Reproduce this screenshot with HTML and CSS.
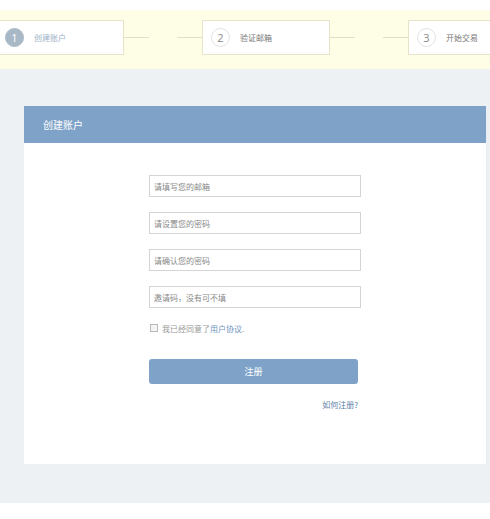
FILE: index.html
```html
<!DOCTYPE html>
<html>
<head>
    <meta charset="UTF-8">
    <meta name="viewport" content="width=device-width, initial-scale=1.0">
    <title>创建账户</title>
    <link rel="stylesheet" href="styles.css">
</head>
<body>
    <div class="top-gap"></div>
    <div class="steps-band">
        <div class="steps">
            <div class="step step-active">
                <span class="step-num">1</span>
                <span class="step-text">创建账户</span>
            </div>
            <div class="connector"><i></i><i></i></div>
            <div class="step">
                <span class="step-num">2</span>
                <span class="step-text">验证邮箱</span>
            </div>
            <div class="connector"><i></i><i></i></div>
            <div class="step">
                <span class="step-num">3</span>
                <span class="step-text">开始交易</span>
            </div>
        </div>
    </div>

    <div class="main">
        <div class="card">
            <div class="card-header">创建账户</div>
            <div class="card-body">
                <form class="reg-form">
                    <input type="text" class="field" placeholder="请填写您的邮箱">
                    <input type="password" class="field" placeholder="请设置您的密码">
                    <input type="password" class="field" placeholder="请确认您的密码">
                    <input type="text" class="field" placeholder="邀请码，没有可不填">
                    <label class="agree">
                        <span class="check"></span>
                        我已经同意了<a href="#" class="agree-link">用户协议</a>.
                    </label>
                    <button type="button" class="btn-submit">注册</button>
                    <div class="help"><a href="#">如何注册?</a></div>
                </form>
            </div>
        </div>
    </div>
</body>
</html>
```

FILE: styles.css
```css
body {
    margin: 0;
    font-family: "Noto Sans CJK SC", "Noto Sans", sans-serif;
    background-color: #ffffff;
    color: #666666;
}
.top-gap {
    height: 10px;
}
.steps-band {
    background-color: #fefde6;
    height: 59px;
    overflow: hidden;
}
.steps {
    display: flex;
    align-items: center;
    margin-left: -4px;
    padding-top: 10px;
    width: 560px;
}
.step {
    box-sizing: border-box;
    width: 128px;
    height: 35px;
    flex-shrink: 0;
    background-color: #ffffff;
    border: 1px solid #e8e4cb;
    display: flex;
    align-items: center;
    padding-left: 8px;
}
.step-num {
    box-sizing: border-box;
    width: 19px;
    height: 19px;
    border-radius: 50%;
    border: 1px solid #e3e3e3;
    color: #8a8a8a;
    font-size: 11px;
    line-height: 17px;
    text-align: center;
    font-family: "Open Sans", sans-serif;
    margin-right: 10px;
}
.step-text {
    font-size: 8px;
    color: #777777;
}
.step-active .step-num {
    background-color: #a9b8c7;
    border-color: #a9b8c7;
    color: #ffffff;
}
.step-active .step-text {
    color: #9db1c6;
}
.connector {
    width: 78px;
    flex-shrink: 0;
    display: flex;
    justify-content: space-between;
}
.connector i {
    display: block;
    width: 25px;
    height: 1px;
    background-color: #e3dfc8;
}

.main {
    background-color: #eef1f4;
    padding: 37px 3px 39px 24px;
}
.card {
    background-color: #ffffff;
    border-right: 1px solid #e9edf1;
}
.card-header {
    background-color: #7fa3c8;
    color: #ffffff;
    font-size: 10px;
    height: 37px;
    line-height: 37px;
    padding-left: 19px;
}
.card-body {
    height: 321px;
    padding-top: 32px;
    box-sizing: border-box;
}
.reg-form {
    width: 212px;
    margin: 0 auto;
    display: flex;
    flex-direction: column;
}
.field {
    box-sizing: border-box;
    height: 22px;
    margin: 0 0 15px;
    border: 1px solid #d4d4d4;
    padding: 0 4px;
    font-family: inherit;
    font-size: 8px;
    color: #666666;
    outline: none;
}
.field::placeholder {
    color: #888888;
}
.agree {
    display: flex;
    align-items: center;
    font-size: 8px;
    color: #999999;
    margin-top: -2px;
    margin-left: 1px;
    height: 14px;
}
.check {
    box-sizing: border-box;
    width: 8px;
    height: 8px;
    border: 1px solid #b8b8b8;
    background-color: #f4f4f4;
    margin-right: 4px;
}
.agree-link {
    color: #6d93bd;
    text-decoration: none;
}
.btn-submit {
    margin-top: 24px;
    width: 209px;
    height: 25px;
    border: none;
    border-radius: 3px;
    background-color: #7fa3c8;
    color: #ffffff;
    font-family: inherit;
    font-size: 9px;
    cursor: pointer;
}
.help {
    width: 209px;
    text-align: right;
    margin-top: 15px;
    font-size: 8px;
}
.help a {
    color: #5b7ea6;
    text-decoration: none;
}
```
